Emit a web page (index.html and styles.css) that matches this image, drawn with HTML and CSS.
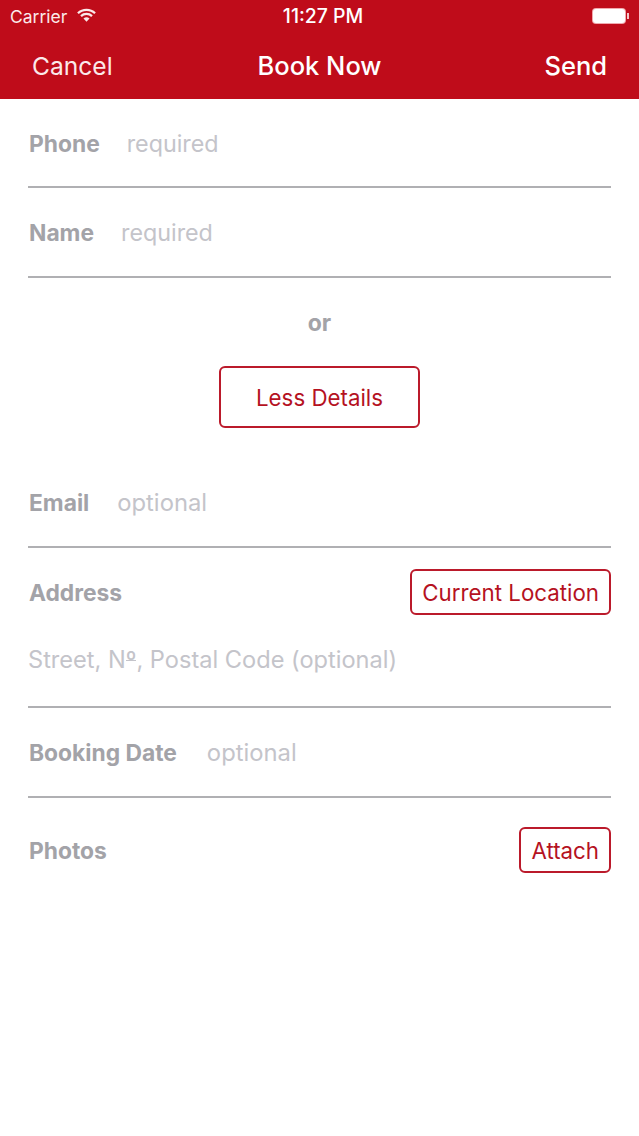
FILE: index.html
```html
<!DOCTYPE html>
<html lang="en">
<head>
  <meta charset="UTF-8">
  <title>Book Now</title>
  <link rel="stylesheet" href="styles.css">
</head>
<body>

  <div class="top">
    <div class="status">
      <div class="status-left">
        <span>Carrier</span>
        <svg class="wifi" width="19" height="14" viewBox="0 0 20 14">
          <path d="M1 5.200a13 13 0 0 1 18 0" fill="none" stroke="#fbe9ea" stroke-width="2.400"/>
          <path d="M4.200 8.200a8.500 8.500 0 0 1 11.600 0" fill="none" stroke="#fbe9ea" stroke-width="2.400"/>
          <path d="M6.800 10.700a4.800 4.800 0 0 1 6.400 0L10 14z" fill="#fbe9ea"/>
        </svg>
      </div>
      <div class="status-time">11:27 PM</div>
      <div class="status-right">
        <div class="battery"></div>
        <div class="battery-tip"></div>
      </div>
    </div>
    <div class="nav">
      <span class="nav-cancel">Cancel</span>
      <span class="nav-title">Book Now</span>
      <span class="nav-send">Send</span>
    </div>
  </div>

  <div class="form">
    <div class="row row-first">
      <span class="label">Phone</span>
      <span class="hint hint-required">required</span>
    </div>
    <div class="row">
      <span class="label">Name</span>
      <span class="hint hint-required">required</span>
    </div>

    <div class="or">or</div>
    <div class="center">
      <button class="btn btn-big">Less Details</button>
    </div>

    <div class="row row-email">
      <span class="label">Email</span>
      <span class="hint">optional</span>
    </div>

    <div class="address">
      <div class="split">
        <span class="label">Address</span>
        <button class="btn">Current Location</button>
      </div>
      <div class="hint address-hint">Street, N<span class="ordinal">º</span>, Postal Code (optional)</div>
    </div>

    <div class="row row-date">
      <span class="label">Booking Date</span>
      <span class="hint">optional</span>
    </div>

    <div class="split photos">
      <span class="label">Photos</span>
      <button class="btn">Attach</button>
    </div>
  </div>

</body>
</html>
```

FILE: styles.css
```css
body {
  margin: 0;
  height: 1136px;
  overflow: hidden;
  background-color: #fff;
  font-family: Inter, "Liberation Sans", sans-serif;
}
.top {
  height: 99px;
  background-color: #bf0c1a;
  color: #fff;
}
.status {
  height: 32px;
  padding: 0 10px;
  display: grid;
  grid-template-columns: 1fr auto 1fr;
  align-items: center;
  font-size: 17.500px;
  color: #fbe9ea;
}
.status-left {
  display: flex;
  align-items: center;
  gap: 10px;
}
.wifi {
  margin-top: -3px;
}
.status-time {
  padding-left: 7px;
  font-size: 19.400px;
  font-weight: 500;
  color: #fff;
}
.status-right {
  display: flex;
  justify-content: flex-end;
  align-items: center;
}
.battery {
  width: 32px;
  height: 14px;
  background: #fff;
  border-radius: 3px;
  box-shadow: 0 0 0 1px #f0a9ae;
}
.battery-tip {
  width: 2px;
  height: 6px;
  margin-left: 2px;
  background: #f5c4c7;
}
.nav {
  height: 67px;
  padding: 0 32px;
  display: grid;
  grid-template-columns: 1fr auto 1fr;
  align-items: center;
  font-size: 25.500px;
}
.nav-cancel {
  font-size: 24.600px;
  color: #fbe9ea;
}
.nav-title {
  font-weight: 500;
}
.nav-send {
  font-weight: 500;
  text-align: right;
}
.form {
  padding: 0 28px;
}
.row {
  height: 88px;
  border-bottom: 2px solid #b0b0b3;
  display: flex;
  align-items: center;
  gap: 28px;
}
.row-first {
  height: 86px;
  padding-top: 1px;
}
.row-date {
  gap: 30px;
}
.label {
  padding-left: 1px;
  font-size: 22.800px;
  font-weight: 700;
  color: #a3a3a8;
}
.hint {
  font-size: 23.800px;
  color: #c4c4ca;
}
.hint-required {
  margin-left: -1px;
  font-size: 23.300px;
}
.or {
  margin-top: 31px;
  text-align: center;
  font-size: 23px;
  font-weight: 700;
  color: #a3a3a8;
}
.center {
  margin-top: 29px;
  display: flex;
  justify-content: center;
}
.btn {
  height: 46px;
  padding: 0 10px;
  background: #fff;
  border: 2px solid #bb1a2b;
  border-radius: 6px;
  font-family: inherit;
  font-size: 22.300px;
  color: #b5121f;
}
.btn-big {
  width: 201px;
  height: 62px;
}
.row-email {
  margin-top: 30px;
}
.address {
  height: 158px;
  border-bottom: 2px solid #b0b0b3;
}
.split {
  display: flex;
  justify-content: space-between;
  align-items: center;
}
.address .split {
  padding-top: 21px;
}
.address-hint {
  margin-top: 30px;
  font-size: 23.600px;
}
.ordinal {
  background: linear-gradient(#c4c4ca, #c4c4ca) no-repeat 0 15px / 100% 1px;
}
.photos {
  padding-top: 29px;
}
```
